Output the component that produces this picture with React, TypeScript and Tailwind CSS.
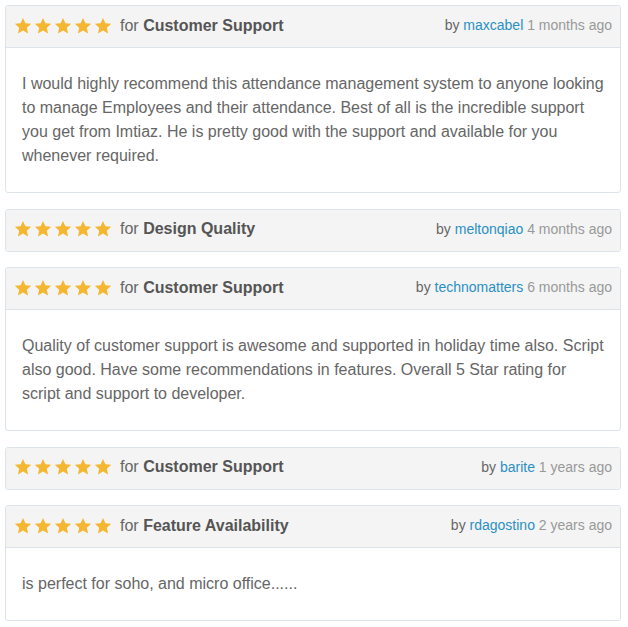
import React from "react";

type Review = { title: string; user: string; time: string; body?: string };

const reviews: Review[] = [
  {
    title: "Customer Support",
    user: "maxcabel",
    time: "1 months ago",
    body: "I would highly recommend this attendance management system to anyone looking to manage Employees and their attendance. Best of all is the incredible support you get from Imtiaz. He is pretty good with the support and available for you whenever required.",
  },
  { title: "Design Quality", user: "meltonqiao", time: "4 months ago" },
  {
    title: "Customer Support",
    user: "technomatters",
    time: "6 months ago",
    body: "Quality of customer support is awesome and supported in holiday time also. Script also good. Have some recommendations in features. Overall 5 Star rating for script and support to developer.",
  },
  { title: "Customer Support", user: "barite", time: "1 years ago" },
  { title: "Feature Availability", user: "rdagostino", time: "2 years ago", body: "is perfect for soho, and micro office......" },
];

function Star() {
  return (
    <svg width="18" height="18" viewBox="0 0 24 24" className="block">
      <path
        fill="#f5b731"
        d="M12 1.2l3.2 7.1 7.7.8-5.8 5.2 1.7 7.6L12 18l-6.8 3.9 1.7-7.6-5.8-5.2 7.7-.8z"
      />
    </svg>
  );
}

export default function App() {
  return (
    <div className="bg-white pl-[5px] pr-[7px] pt-[5px] font-['Liberation_Sans',Arial,sans-serif] text-[16px] text-[#666]">
      <div className="flex flex-col gap-[15.5px]">
        {reviews.map((r, i) => (
          <div key={i} className="rounded-[3px] border border-[#dde3ea] bg-white overflow-hidden">
            <div className="flex h-[41px] items-center justify-between bg-[#f4f4f4] pl-[8px] pr-[8px] pb-[2px]">
              <div className="flex items-center">
                <div className="flex gap-[2px]">
                  {[0, 1, 2, 3, 4].map((s) => (
                    <Star key={s} />
                  ))}
                </div>
                <span className="ml-[8px] text-[#666]">
                  for <span className="font-bold text-[#555]">{r.title}</span>
                </span>
              </div>
              <div className="text-[14px] text-[#666]">
                by <span className="text-[#2a90c4]">{r.user}</span>{" "}
                <span className="text-[#999]">{r.time}</span>
              </div>
            </div>
            {r.body && (
              <div className="border-t border-[#dde3ea] px-4 pt-[24px] pb-[24px] leading-6 text-[#666]">{r.body}</div>
            )}
          </div>
        ))}
      </div>
    </div>
  );
}
